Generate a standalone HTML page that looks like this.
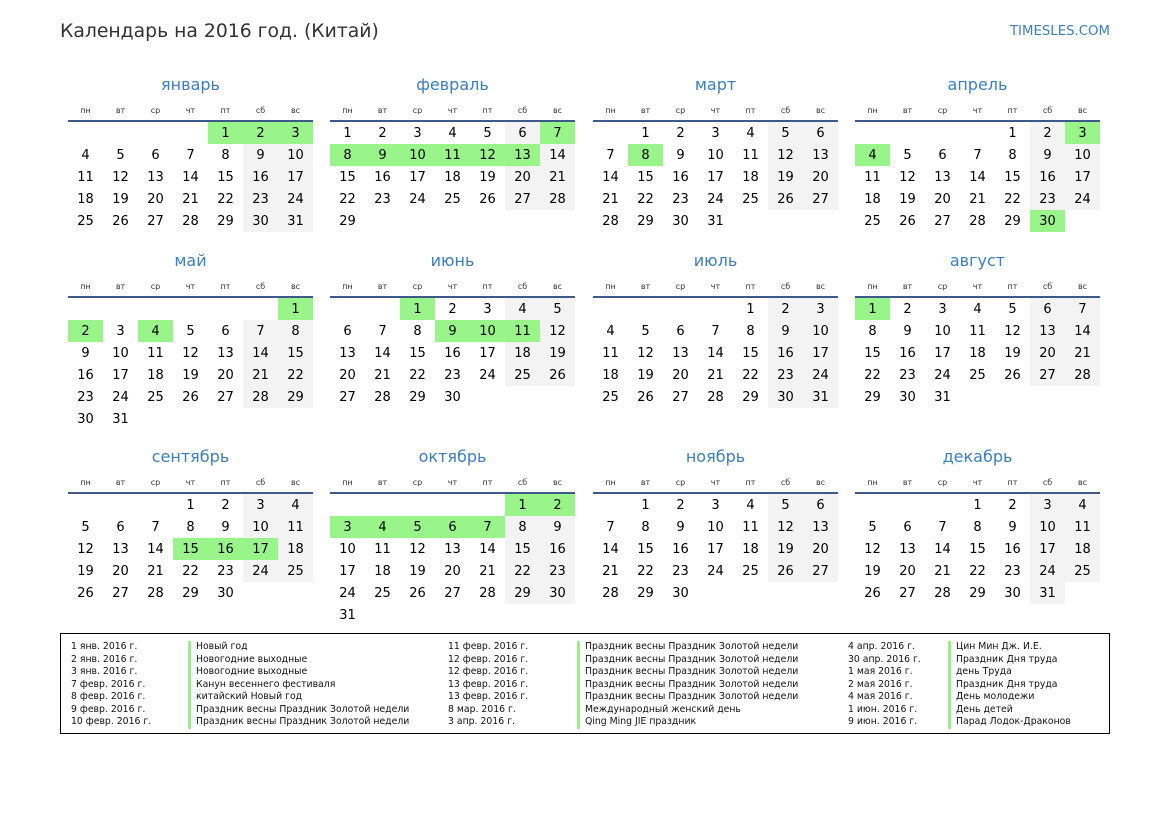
<!DOCTYPE html>
<html><head><meta charset="utf-8"><style>
body{margin:0;width:1169px;height:827px;background:#fff;font-family:"DejaVu Sans","Liberation Sans",sans-serif;position:relative;overflow:hidden;color:#000}
.t{position:absolute;left:60px;top:21px;font-size:18.8px;color:#333}
.s{position:absolute;right:59px;top:24px;font-size:13.3px;color:#3a7fc1}
.m{position:absolute;width:245px}
.m h2{margin:0;height:30px;line-height:30px;text-align:center;font-weight:normal;font-size:16px;color:#3a7fc1}
.wd{display:flex;height:18px;line-height:18px;font-size:8px;color:#333;border-bottom:2px solid #3d5a8a;margin-top:2px}
.wd span{flex:1;text-align:center}
table{border-collapse:collapse;table-layout:fixed;width:245px;margin-top:0px}
td{width:35px;height:22px;padding:0;text-align:center;font-size:13px}
.w{background:#f3f3f3}.h{background:#99f58a}
.lg{position:absolute;left:60px;top:633px;width:1048px;height:99px;border:1px solid #000}
.c{position:absolute;top:7px;font-size:9.3px;line-height:12.5px;white-space:nowrap;color:#111}
.b{border-left:3px solid #99ee88;padding-left:5px}
</style></head><body>
<div class="t">Календарь на 2016 год. (Китай)</div>
<div class="s">TIMESLES.COM</div>

<div class="m" style="left:68px;top:70px"><h2>январь</h2><div class="wd"><span>пн</span><span>вт</span><span>ср</span><span>чт</span><span>пт</span><span>сб</span><span>вс</span></div><table>
<tr><td></td><td></td><td></td><td></td><td class="h">1</td><td class="h">2</td><td class="h">3</td></tr>
<tr><td>4</td><td>5</td><td>6</td><td>7</td><td>8</td><td class="w">9</td><td class="w">10</td></tr>
<tr><td>11</td><td>12</td><td>13</td><td>14</td><td>15</td><td class="w">16</td><td class="w">17</td></tr>
<tr><td>18</td><td>19</td><td>20</td><td>21</td><td>22</td><td class="w">23</td><td class="w">24</td></tr>
<tr><td>25</td><td>26</td><td>27</td><td>28</td><td>29</td><td class="w">30</td><td class="w">31</td></tr>
</table></div>

<div class="m" style="left:330px;top:70px"><h2>февраль</h2><div class="wd"><span>пн</span><span>вт</span><span>ср</span><span>чт</span><span>пт</span><span>сб</span><span>вс</span></div><table>
<tr><td>1</td><td>2</td><td>3</td><td>4</td><td>5</td><td class="w">6</td><td class="h">7</td></tr>
<tr><td class="h">8</td><td class="h">9</td><td class="h">10</td><td class="h">11</td><td class="h">12</td><td class="h">13</td><td class="w">14</td></tr>
<tr><td>15</td><td>16</td><td>17</td><td>18</td><td>19</td><td class="w">20</td><td class="w">21</td></tr>
<tr><td>22</td><td>23</td><td>24</td><td>25</td><td>26</td><td class="w">27</td><td class="w">28</td></tr>
<tr><td>29</td><td></td><td></td><td></td><td></td><td></td><td></td></tr>
</table></div>

<div class="m" style="left:593px;top:70px"><h2>март</h2><div class="wd"><span>пн</span><span>вт</span><span>ср</span><span>чт</span><span>пт</span><span>сб</span><span>вс</span></div><table>
<tr><td></td><td>1</td><td>2</td><td>3</td><td>4</td><td class="w">5</td><td class="w">6</td></tr>
<tr><td>7</td><td class="h">8</td><td>9</td><td>10</td><td>11</td><td class="w">12</td><td class="w">13</td></tr>
<tr><td>14</td><td>15</td><td>16</td><td>17</td><td>18</td><td class="w">19</td><td class="w">20</td></tr>
<tr><td>21</td><td>22</td><td>23</td><td>24</td><td>25</td><td class="w">26</td><td class="w">27</td></tr>
<tr><td>28</td><td>29</td><td>30</td><td>31</td><td></td><td></td><td></td></tr>
</table></div>

<div class="m" style="left:855px;top:70px"><h2>апрель</h2><div class="wd"><span>пн</span><span>вт</span><span>ср</span><span>чт</span><span>пт</span><span>сб</span><span>вс</span></div><table>
<tr><td></td><td></td><td></td><td></td><td>1</td><td class="w">2</td><td class="h">3</td></tr>
<tr><td class="h">4</td><td>5</td><td>6</td><td>7</td><td>8</td><td class="w">9</td><td class="w">10</td></tr>
<tr><td>11</td><td>12</td><td>13</td><td>14</td><td>15</td><td class="w">16</td><td class="w">17</td></tr>
<tr><td>18</td><td>19</td><td>20</td><td>21</td><td>22</td><td class="w">23</td><td class="w">24</td></tr>
<tr><td>25</td><td>26</td><td>27</td><td>28</td><td>29</td><td class="h">30</td><td></td></tr>
</table></div>

<div class="m" style="left:68px;top:246px"><h2>май</h2><div class="wd"><span>пн</span><span>вт</span><span>ср</span><span>чт</span><span>пт</span><span>сб</span><span>вс</span></div><table>
<tr><td></td><td></td><td></td><td></td><td></td><td></td><td class="h">1</td></tr>
<tr><td class="h">2</td><td>3</td><td class="h">4</td><td>5</td><td>6</td><td class="w">7</td><td class="w">8</td></tr>
<tr><td>9</td><td>10</td><td>11</td><td>12</td><td>13</td><td class="w">14</td><td class="w">15</td></tr>
<tr><td>16</td><td>17</td><td>18</td><td>19</td><td>20</td><td class="w">21</td><td class="w">22</td></tr>
<tr><td>23</td><td>24</td><td>25</td><td>26</td><td>27</td><td class="w">28</td><td class="w">29</td></tr>
<tr><td>30</td><td>31</td><td></td><td></td><td></td><td></td><td></td></tr>
</table></div>

<div class="m" style="left:330px;top:246px"><h2>июнь</h2><div class="wd"><span>пн</span><span>вт</span><span>ср</span><span>чт</span><span>пт</span><span>сб</span><span>вс</span></div><table>
<tr><td></td><td></td><td class="h">1</td><td>2</td><td>3</td><td class="w">4</td><td class="w">5</td></tr>
<tr><td>6</td><td>7</td><td>8</td><td class="h">9</td><td class="h">10</td><td class="h">11</td><td class="w">12</td></tr>
<tr><td>13</td><td>14</td><td>15</td><td>16</td><td>17</td><td class="w">18</td><td class="w">19</td></tr>
<tr><td>20</td><td>21</td><td>22</td><td>23</td><td>24</td><td class="w">25</td><td class="w">26</td></tr>
<tr><td>27</td><td>28</td><td>29</td><td>30</td><td></td><td></td><td></td></tr>
</table></div>

<div class="m" style="left:593px;top:246px"><h2>июль</h2><div class="wd"><span>пн</span><span>вт</span><span>ср</span><span>чт</span><span>пт</span><span>сб</span><span>вс</span></div><table>
<tr><td></td><td></td><td></td><td></td><td>1</td><td class="w">2</td><td class="w">3</td></tr>
<tr><td>4</td><td>5</td><td>6</td><td>7</td><td>8</td><td class="w">9</td><td class="w">10</td></tr>
<tr><td>11</td><td>12</td><td>13</td><td>14</td><td>15</td><td class="w">16</td><td class="w">17</td></tr>
<tr><td>18</td><td>19</td><td>20</td><td>21</td><td>22</td><td class="w">23</td><td class="w">24</td></tr>
<tr><td>25</td><td>26</td><td>27</td><td>28</td><td>29</td><td class="w">30</td><td class="w">31</td></tr>
</table></div>

<div class="m" style="left:855px;top:246px"><h2>август</h2><div class="wd"><span>пн</span><span>вт</span><span>ср</span><span>чт</span><span>пт</span><span>сб</span><span>вс</span></div><table>
<tr><td class="h">1</td><td>2</td><td>3</td><td>4</td><td>5</td><td class="w">6</td><td class="w">7</td></tr>
<tr><td>8</td><td>9</td><td>10</td><td>11</td><td>12</td><td class="w">13</td><td class="w">14</td></tr>
<tr><td>15</td><td>16</td><td>17</td><td>18</td><td>19</td><td class="w">20</td><td class="w">21</td></tr>
<tr><td>22</td><td>23</td><td>24</td><td>25</td><td>26</td><td class="w">27</td><td class="w">28</td></tr>
<tr><td>29</td><td>30</td><td>31</td><td></td><td></td><td></td><td></td></tr>
</table></div>

<div class="m" style="left:68px;top:442px"><h2>сентябрь</h2><div class="wd"><span>пн</span><span>вт</span><span>ср</span><span>чт</span><span>пт</span><span>сб</span><span>вс</span></div><table>
<tr><td></td><td></td><td></td><td>1</td><td>2</td><td class="w">3</td><td class="w">4</td></tr>
<tr><td>5</td><td>6</td><td>7</td><td>8</td><td>9</td><td class="w">10</td><td class="w">11</td></tr>
<tr><td>12</td><td>13</td><td>14</td><td class="h">15</td><td class="h">16</td><td class="h">17</td><td class="w">18</td></tr>
<tr><td>19</td><td>20</td><td>21</td><td>22</td><td>23</td><td class="w">24</td><td class="w">25</td></tr>
<tr><td>26</td><td>27</td><td>28</td><td>29</td><td>30</td><td></td><td></td></tr>
</table></div>

<div class="m" style="left:330px;top:442px"><h2>октябрь</h2><div class="wd"><span>пн</span><span>вт</span><span>ср</span><span>чт</span><span>пт</span><span>сб</span><span>вс</span></div><table>
<tr><td></td><td></td><td></td><td></td><td></td><td class="h">1</td><td class="h">2</td></tr>
<tr><td class="h">3</td><td class="h">4</td><td class="h">5</td><td class="h">6</td><td class="h">7</td><td class="w">8</td><td class="w">9</td></tr>
<tr><td>10</td><td>11</td><td>12</td><td>13</td><td>14</td><td class="w">15</td><td class="w">16</td></tr>
<tr><td>17</td><td>18</td><td>19</td><td>20</td><td>21</td><td class="w">22</td><td class="w">23</td></tr>
<tr><td>24</td><td>25</td><td>26</td><td>27</td><td>28</td><td class="w">29</td><td class="w">30</td></tr>
<tr><td>31</td><td></td><td></td><td></td><td></td><td></td><td></td></tr>
</table></div>

<div class="m" style="left:593px;top:442px"><h2>ноябрь</h2><div class="wd"><span>пн</span><span>вт</span><span>ср</span><span>чт</span><span>пт</span><span>сб</span><span>вс</span></div><table>
<tr><td></td><td>1</td><td>2</td><td>3</td><td>4</td><td class="w">5</td><td class="w">6</td></tr>
<tr><td>7</td><td>8</td><td>9</td><td>10</td><td>11</td><td class="w">12</td><td class="w">13</td></tr>
<tr><td>14</td><td>15</td><td>16</td><td>17</td><td>18</td><td class="w">19</td><td class="w">20</td></tr>
<tr><td>21</td><td>22</td><td>23</td><td>24</td><td>25</td><td class="w">26</td><td class="w">27</td></tr>
<tr><td>28</td><td>29</td><td>30</td><td></td><td></td><td></td><td></td></tr>
</table></div>

<div class="m" style="left:855px;top:442px"><h2>декабрь</h2><div class="wd"><span>пн</span><span>вт</span><span>ср</span><span>чт</span><span>пт</span><span>сб</span><span>вс</span></div><table>
<tr><td></td><td></td><td></td><td>1</td><td>2</td><td class="w">3</td><td class="w">4</td></tr>
<tr><td>5</td><td>6</td><td>7</td><td>8</td><td>9</td><td class="w">10</td><td class="w">11</td></tr>
<tr><td>12</td><td>13</td><td>14</td><td>15</td><td>16</td><td class="w">17</td><td class="w">18</td></tr>
<tr><td>19</td><td>20</td><td>21</td><td>22</td><td>23</td><td class="w">24</td><td class="w">25</td></tr>
<tr><td>26</td><td>27</td><td>28</td><td>29</td><td>30</td><td class="w">31</td><td></td></tr>
</table></div>

<div class="lg">
<div class="c" style="left:10px">1 янв. 2016 г.<br>2 янв. 2016 г.<br>3 янв. 2016 г.<br>7 февр. 2016 г.<br>8 февр. 2016 г.<br>9 февр. 2016 г.<br>10 февр. 2016 г.</div>
<div class="c b" style="left:127px">Новый год<br>Новогодние выходные<br>Новогодние выходные<br>Канун весеннего фестиваля<br>китайский Новый год<br>Праздник весны Праздник Золотой недели<br>Праздник весны Праздник Золотой недели</div>
<div class="c" style="left:387px">11 февр. 2016 г.<br>12 февр. 2016 г.<br>12 февр. 2016 г.<br>13 февр. 2016 г.<br>13 февр. 2016 г.<br>8 мар. 2016 г.<br>3 апр. 2016 г.</div>
<div class="c b" style="left:516px">Праздник весны Праздник Золотой недели<br>Праздник весны Праздник Золотой недели<br>Праздник весны Праздник Золотой недели<br>Праздник весны Праздник Золотой недели<br>Праздник весны Праздник Золотой недели<br>Международный женский день<br>Qing Ming JIE праздник</div>
<div class="c" style="left:787px">4 апр. 2016 г.<br>30 апр. 2016 г.<br>1 мая 2016 г.<br>2 мая 2016 г.<br>4 мая 2016 г.<br>1 июн. 2016 г.<br>9 июн. 2016 г.</div>
<div class="c b" style="left:887px">Цин Мин Дж. И.Е.<br>Праздник Дня труда<br>день Труда<br>Праздник Дня труда<br>День молодежи<br>День детей<br>Парад Лодок-Драконов</div>
</div>
</body></html>
